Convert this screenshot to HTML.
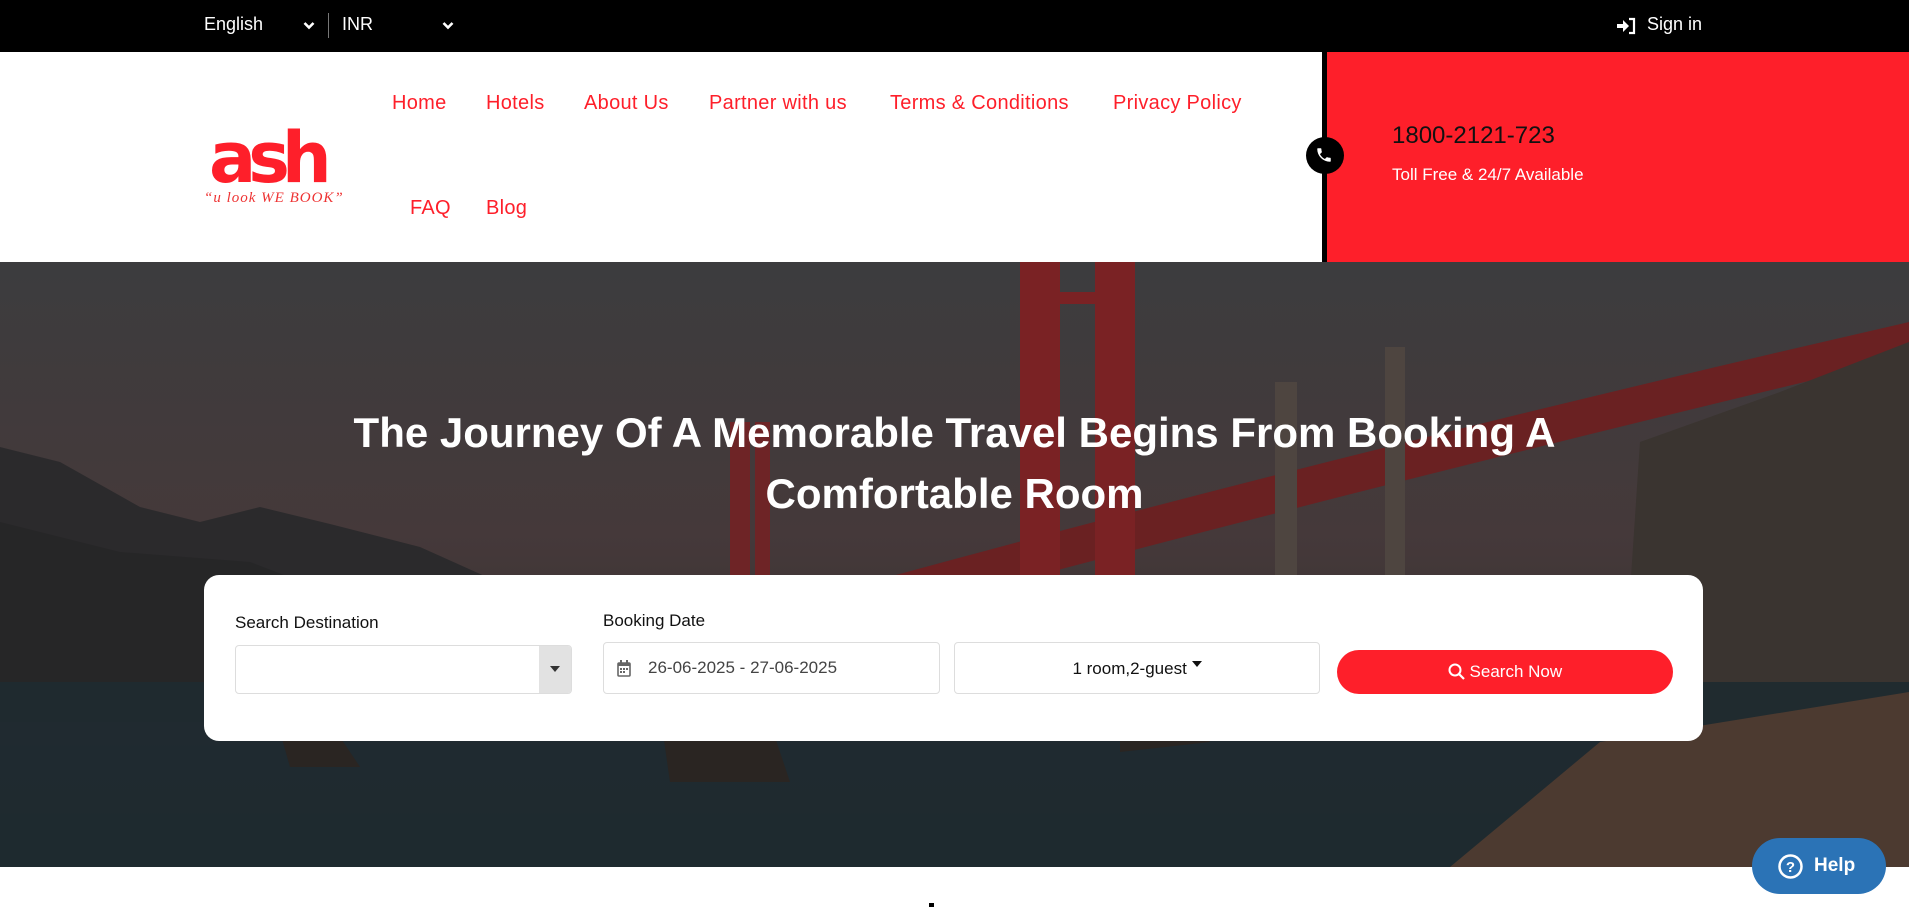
<!DOCTYPE html>
<html><head><meta charset="utf-8"><style>
*{margin:0;padding:0;box-sizing:border-box}
body{width:1909px;height:907px;overflow:hidden;font-family:"Liberation Sans",Arial,sans-serif;background:#fff;position:relative}
.top{position:absolute;left:0;top:0;width:1909px;height:52px;background:#000;color:#fff;font-size:18px}
.top span{position:absolute;top:14px}
.hdr{position:absolute;top:52px;left:0;width:1909px;height:210px;background:#fff}
.nav a{position:absolute;color:#fe1f2a;font-size:20px;text-decoration:none;letter-spacing:.3px}
.red{position:absolute;left:1327px;top:52px;width:582px;height:210px;background:#fe1f2a}
.bl{position:absolute;left:1322px;top:52px;width:5px;height:210px;background:#000}
.hero{position:absolute;top:262px;left:0;width:1909px;height:605px;overflow:hidden}
h1{position:absolute;top:402px;left:0;width:1909px;text-align:center;color:#fff;font-size:42px;line-height:61px;font-weight:bold;letter-spacing:0}
.card{position:absolute;left:204px;top:575px;width:1499px;height:166px;background:#fff;border-radius:15px}
.lbl{position:absolute;font-size:17px;color:#111}
.box{position:absolute;border:1px solid #ddd;border-radius:4px;background:#fff}
</style></head><body>
<div class="top">
<span style="left:204px">English</span>
<svg style="position:absolute;left:303px;top:21px" width="12" height="9" viewBox="0 0 12 9"><path d="M1.5 2l4.5 4.5L10.5 2" stroke="#fff" stroke-width="2.6" fill="none"/></svg>
<div style="position:absolute;left:328px;top:13px;width:1px;height:25px;background:#777"></div>
<span style="left:342px">INR</span>
<svg style="position:absolute;left:442px;top:21px" width="12" height="9" viewBox="0 0 12 9"><path d="M1.5 2l4.5 4.5L10.5 2" stroke="#fff" stroke-width="2.6" fill="none"/></svg>
<svg style="position:absolute;left:1617px;top:17px" width="20" height="18" viewBox="0 0 20 18"><path d="M0 7h6V3l6 6-6 6v-4H0z" fill="#fff"/><path d="M12 2h5v14h-5" stroke="#fff" stroke-width="2.2" fill="none"/></svg>
<span style="left:1647px">Sign in</span>
</div>
<div class="hdr">
<svg style="position:absolute;left:203px;top:60px" width="150" height="95" viewBox="0 0 150 95">
<text x="6" y="70" font-family="DejaVu Sans" font-weight="bold" font-size="70" fill="#fe1f2a" letter-spacing="-8">ash</text>
<text x="1" y="90" font-family="Liberation Serif" font-style="italic" font-size="15" fill="#e33" letter-spacing="1">“u look  WE  BOOK”</text>
</svg>
<div class="nav">
<a style="left:392px;top:40px">Home</a><a style="left:486px;top:40px">Hotels</a><a style="left:584px;top:40px">About Us</a><a style="left:709px;top:40px">Partner with us</a><a style="left:890px;top:40px">Terms &amp; Conditions</a><a style="left:1113px;top:40px">Privacy Policy</a>
<a style="left:410px;top:145px">FAQ</a><a style="left:486px;top:145px">Blog</a>
</div>
</div>
<div class="red"><div style="position:absolute;left:65px;top:70px;font-size:24px;color:#111">1800-2121-723</div><div style="position:absolute;left:65px;top:113px;font-size:17px;color:#fff">Toll Free &amp; 24/7 Available</div></div>
<div class="bl"></div>
<div style="position:absolute;left:1306px;top:137px;width:38px;height:37px;border-radius:50%;background:#000"></div>
<svg style="position:absolute;left:1315px;top:146px" width="18" height="18" viewBox="0 0 24 24"><path d="M6.6 10.8a15 15 0 006.6 6.6l2.2-2.2c.3-.3.7-.4 1-.2 1.1.4 2.3.6 3.6.6.6 0 1 .4 1 1V20c0 .6-.4 1-1 1A17 17 0 013 4c0-.6.4-1 1-1h3.5c.6 0 1 .4 1 1 0 1.3.2 2.5.6 3.6.1.3 0 .7-.2 1z" fill="#fff"/></svg>
<div class="hero">
<svg width="1909" height="605" viewBox="0 0 1909 605" preserveAspectRatio="none">
<defs><linearGradient id="s" x1="0" y1="0" x2="0" y2="1"><stop offset="0" stop-color="#3c3c3e"/><stop offset=".45" stop-color="#45393a"/><stop offset=".7" stop-color="#3a3233"/><stop offset="1" stop-color="#202a30"/></linearGradient></defs>
<rect width="1909" height="605" fill="url(#s)"/>
<path d="M0 185 L60 200 L140 245 L200 260 L260 245 L330 262 L420 285 L520 330 L640 360 L640 460 L0 460Z" fill="#2b2a2c"/>
<path d="M0 260 L120 290 L250 300 L380 350 L520 360 L640 420 L0 420Z" fill="#262527" opacity=".8"/>
<path d="M780 345 Q1300 200 1909 60 L1909 95 Q1300 240 790 380Z" fill="#6a2122"/>
<path d="M1020 0h40v390h-40zM1095 0h40v390h-40z" fill="#7a2224"/>
<path d="M1020 30h115v12h-115z" fill="#7a2224"/>
<path d="M730 160h20v310h-20zM755 160h15v310h-15z" fill="#6e2426"/>
<path d="M1275 120h22v250h-22zM1385 85h20v280h-20z" fill="#4e4540"/>
<path d="M1640 180 L1780 130 L1909 80 L1909 500 L1620 480Z" fill="#3a3430"/>
<path d="M0 420 L1909 420 L1909 605 L0 605Z" fill="#1e2a30" opacity=".9"/>
<path d="M1450 605 L1600 480 L1909 430 L1909 605Z" fill="#4c3a30"/>
<path d="M280 470 l30-35 30 40 20 30 -70 0z M660 450 l60-30 50 40 20 60 -120 0z M1120 450 l50-20 40 50 -90 10z" fill="#2a2522"/>
</svg>
</div>
<h1>The Journey Of A Memorable Travel Begins From Booking A<br>Comfortable Room</h1>
<div class="card">
<div class="lbl" style="left:31px;top:38px">Search Destination</div>
<div class="lbl" style="left:399px;top:36px">Booking Date</div>
<div class="box" style="left:31px;top:70px;width:337px;height:49px;overflow:hidden"><div style="position:absolute;right:0;top:0;width:32px;height:49px;background:#e2e2e2"></div><div style="position:absolute;right:11px;top:20px;border:5px solid transparent;border-top:6px solid #333"></div></div>
<div class="box" style="left:399px;top:67px;width:337px;height:52px"><svg style="position:absolute;left:13px;top:17px" width="14" height="17" viewBox="0 0 14 17"><rect x="1" y="3" width="12" height="13" rx="1" fill="none" stroke="#666" stroke-width="1.6"/><rect x="1" y="3" width="12" height="3" fill="#666"/><rect x="3" y="0" width="2" height="4" fill="#666"/><rect x="9" y="0" width="2" height="4" fill="#666"/><path d="M3 8h2v2H3zM6 8h2v2H6zM9 8h2v2H9zM3 11h2v2H3zM6 11h2v2H6z" fill="#666"/></svg><span style="position:absolute;left:44px;top:15px;font-size:17px;color:#444">26-06-2025 - 27-06-2025</span></div>
<div class="box" style="left:750px;top:67px;width:366px;height:52px"><span style="position:absolute;left:0;width:100%;text-align:center;top:16px;font-size:17px;color:#111">1 room,2-guest <span style="display:inline-block;border:5px solid transparent;border-top:6px solid #111;vertical-align:2px"></span></span></div>
<div style="position:absolute;left:1133px;top:75px;width:336px;height:44px;border-radius:22px;background:#fe1f2a;color:#fff;font-size:17px;text-align:center;line-height:44px"><svg style="vertical-align:-3px" width="17" height="17" viewBox="0 0 17 17"><circle cx="7" cy="7" r="5.5" stroke="#fff" stroke-width="2" fill="none"/><path d="M11 11l5 5" stroke="#fff" stroke-width="2.2"/></svg> Search Now</div>
</div>
<div style="position:absolute;left:929px;top:903px;width:5px;height:4px;background:#000"></div>
<div style="position:absolute;left:1752px;top:838px;width:134px;height:56px;border-radius:28px;background:#2b73b6;color:#fff;font-weight:bold;font-size:19px;line-height:56px;padding-left:62px">Help
<svg style="position:absolute;left:26px;top:16px" width="25" height="25" viewBox="0 0 25 25"><circle cx="12.5" cy="12.5" r="11" stroke="#fff" stroke-width="2.5" fill="none"/><text x="12.5" y="18" text-anchor="middle" font-family="Liberation Sans" font-weight="bold" font-size="15" fill="#fff">?</text></svg></div>
</body></html>
